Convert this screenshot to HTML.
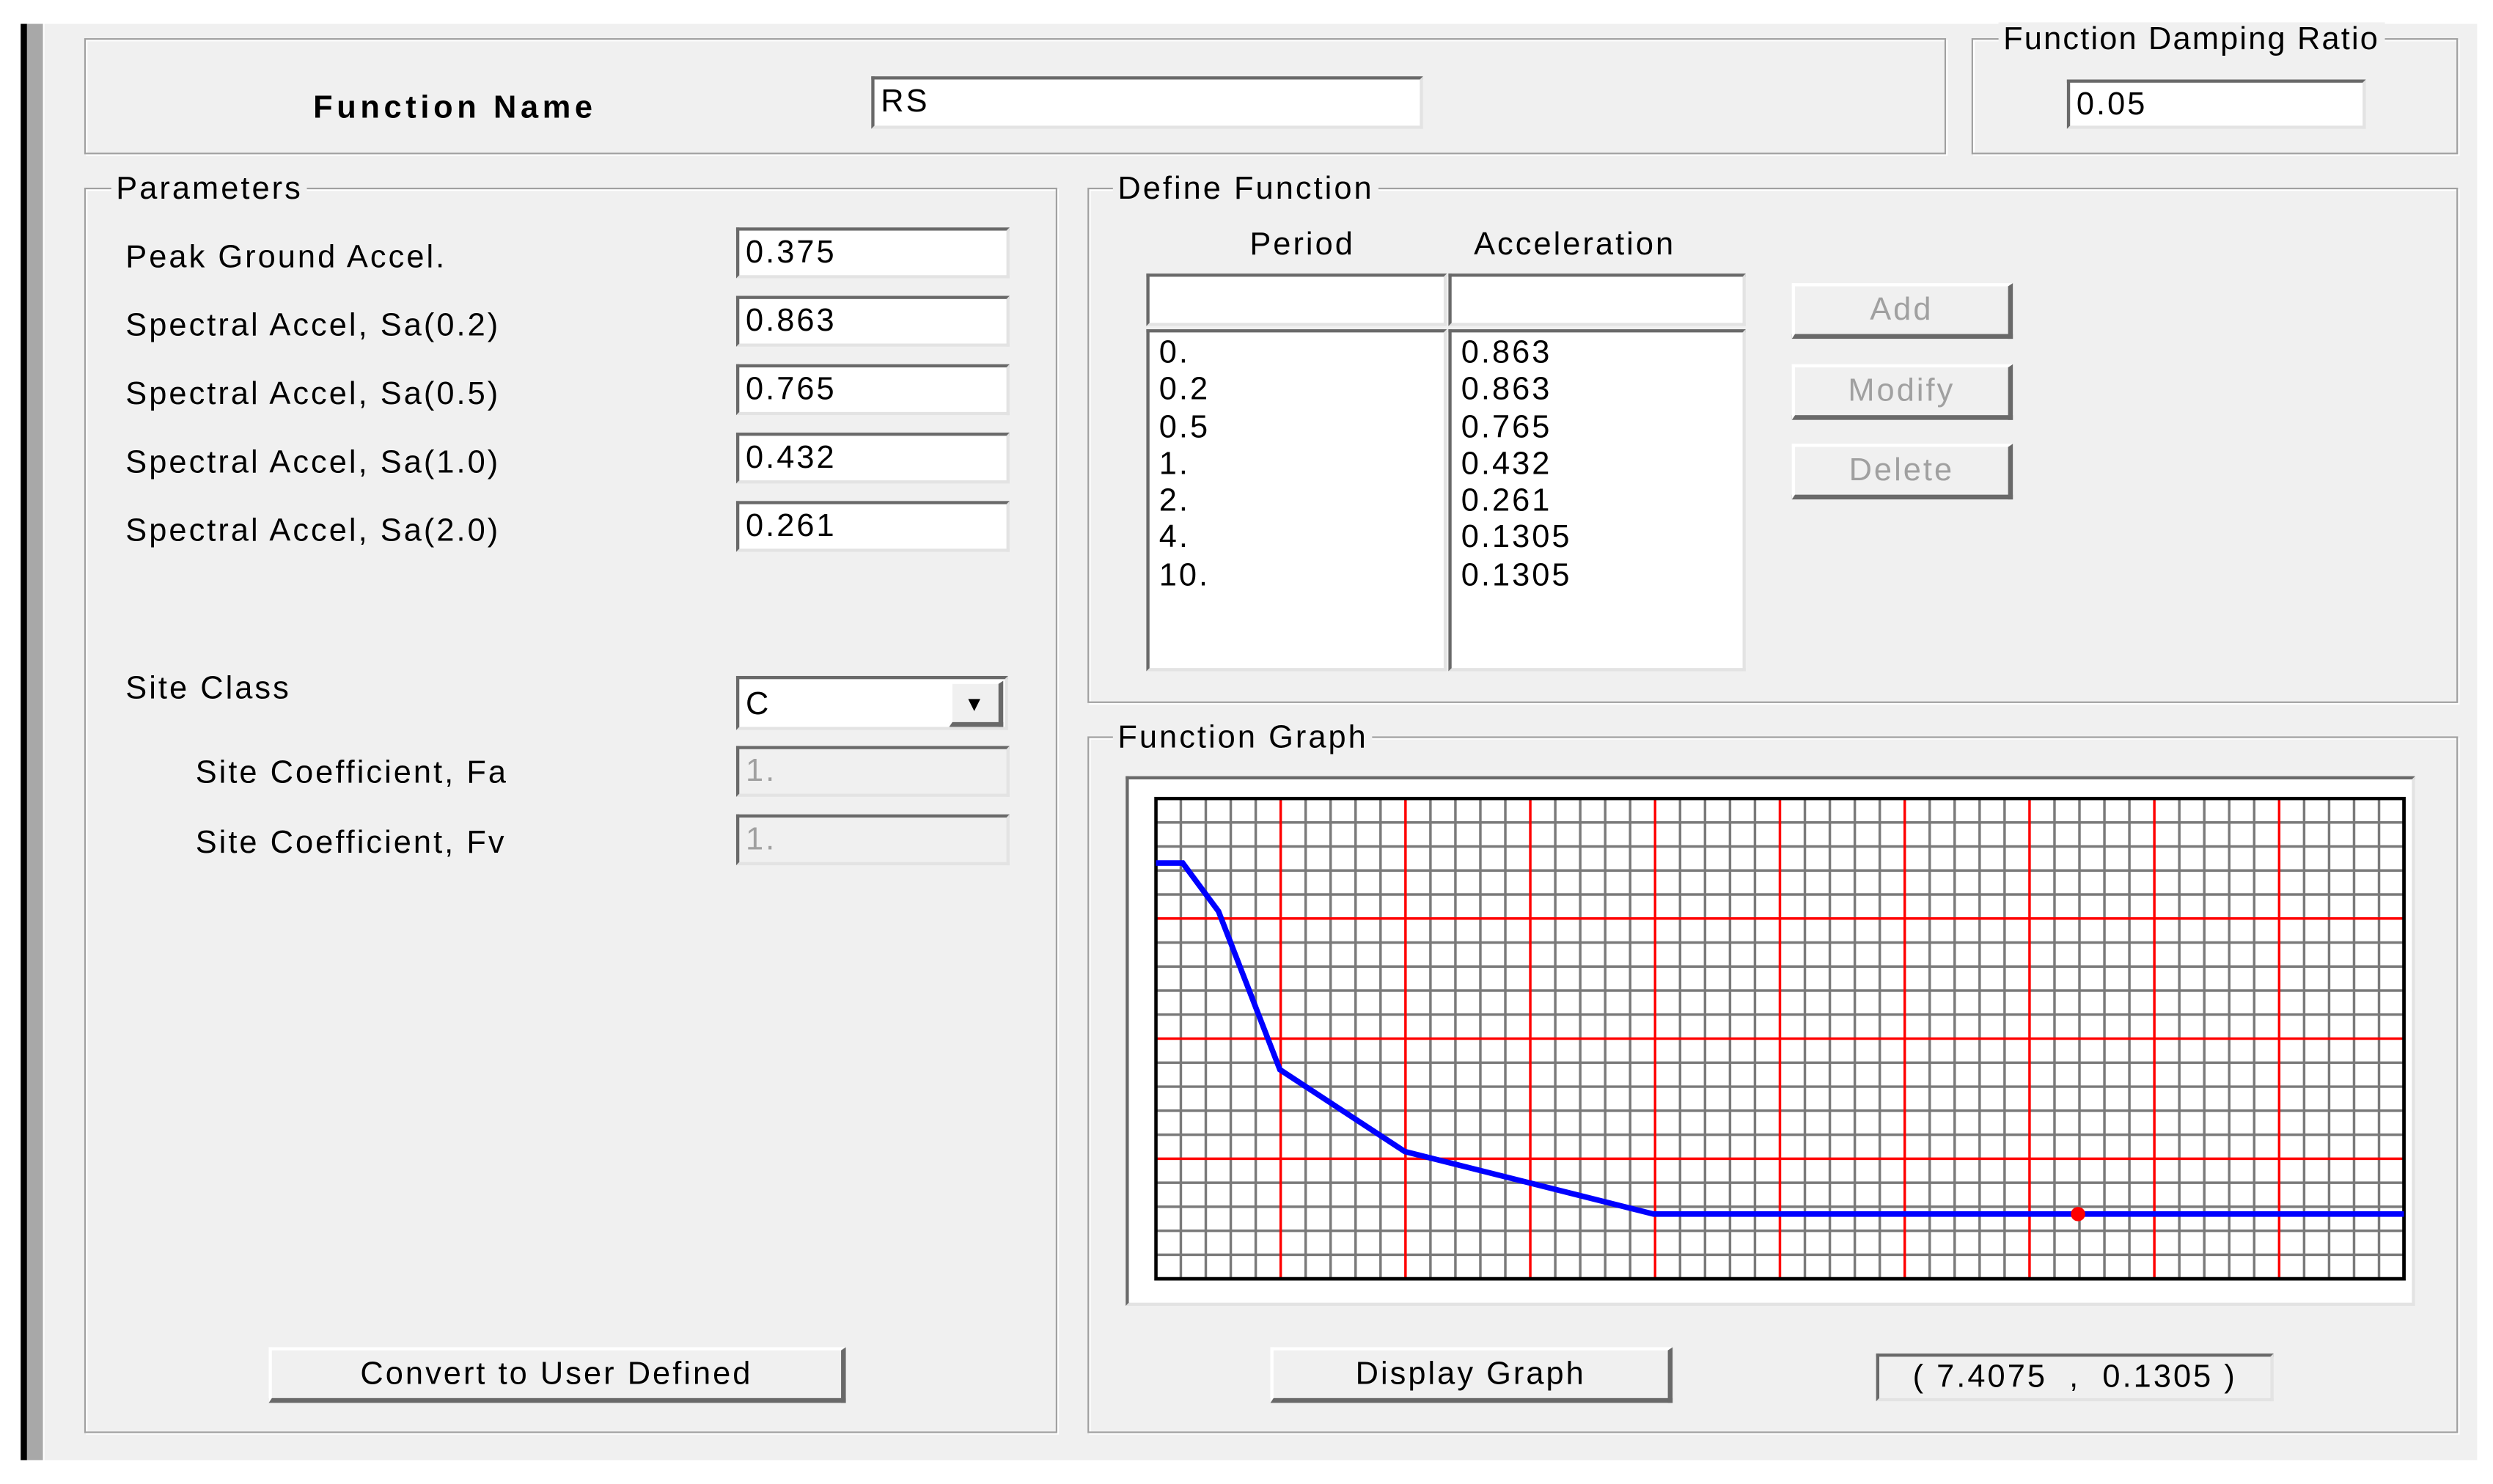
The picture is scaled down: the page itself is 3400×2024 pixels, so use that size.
<!DOCTYPE html>
<html><head><meta charset="utf-8"><style>
html,body{margin:0;padding:0;background:#fff;width:3400px;height:2024px;overflow:hidden}
#s{position:absolute;left:0;top:0;width:1568px;height:933px;transform:scale(2.16837,2.16931);transform-origin:0 0;font-family:"Liberation Sans",sans-serif;font-size:20px;color:#000;letter-spacing:1.4px}
.a{position:absolute}
.g{position:absolute;border:1px solid #a0a0a0;box-shadow:inset 1px 1px 0 #fff,1px 1px 0 #fff}
.lg{position:absolute;background:#f0f0f0;padding:0 3px;line-height:22px}
.tb{position:absolute;background:#fff;border-top:2px solid #696969;border-left:2px solid #696969;border-bottom:2px solid #e3e3e3;border-right:2px solid #e3e3e3;box-sizing:border-box;padding-left:4px;line-height:28px;white-space:nowrap}
.dis{background:#f0f0f0;color:#a0a0a0}
.bt{position:absolute;background:#f0f0f0;border-top:2px solid #fff;border-left:2px solid #fff;border-bottom:3px solid #696969;border-right:3px solid #696969;box-sizing:border-box;text-align:center;line-height:31px}
.lb{position:absolute;white-space:nowrap;line-height:22px}
</style></head><body>
<div id="s">
<div class="a" style="left:28px;top:15px;width:1530px;height:903px;background:#f0f0f0"></div>
<div class="a" style="left:13px;top:15px;width:4px;height:903px;background:#000"></div>
<div class="a" style="left:17px;top:15px;width:10px;height:903px;background:#a8a8a8"></div>

<div class="g" style="left:53px;top:24px;width:1169px;height:71px"></div>
<div class="lb" style="left:197px;top:57px;font-weight:bold;font-size:20px;letter-spacing:2.6px">Function Name</div>
<div class="tb" style="left:548px;top:48px;width:347px;height:33px">RS</div>

<div class="g" style="left:1240px;top:24px;width:304px;height:71px"></div>
<div class="lg" style="left:1257px;top:14px;letter-spacing:1px">Function Damping Ratio</div>
<div class="tb" style="left:1300px;top:50px;width:188px;height:31px">0.05</div>

<div class="g" style="left:53px;top:118px;width:610px;height:781px"></div>
<div class="lg" style="left:70px;top:108px">Parameters</div>
<div class="lb" style="left:79px;top:151px">Peak Ground Accel.</div>
<div class="lb" style="left:79px;top:194px">Spectral Accel, Sa(0.2)</div>
<div class="lb" style="left:79px;top:237px">Spectral Accel, Sa(0.5)</div>
<div class="lb" style="left:79px;top:280px">Spectral Accel, Sa(1.0)</div>
<div class="lb" style="left:79px;top:323px">Spectral Accel, Sa(2.0)</div>
<div class="tb" style="left:463px;top:143px;width:172px;height:32px">0.375</div>
<div class="tb" style="left:463px;top:186px;width:172px;height:32px">0.863</div>
<div class="tb" style="left:463px;top:229px;width:172px;height:32px">0.765</div>
<div class="tb" style="left:463px;top:272px;width:172px;height:32px">0.432</div>
<div class="tb" style="left:463px;top:315px;width:172px;height:32px">0.261</div>
<div class="lb" style="left:79px;top:422px">Site Class</div>
<div class="tb" style="left:463px;top:425px;width:171px;height:34px;line-height:32px">C</div>
<div class="bt" style="left:597px;top:428px;width:34px;height:29px;line-height:26px;font-size:13px">▼</div>
<div class="lb" style="left:123px;top:475px">Site Coefficient, Fa</div>
<div class="lb" style="left:123px;top:519px">Site Coefficient, Fv</div>
<div class="tb dis" style="left:463px;top:469px;width:172px;height:32px">1.</div>
<div class="tb dis" style="left:463px;top:512px;width:172px;height:32px">1.</div>
<div class="bt" style="left:169px;top:847px;width:363px;height:35px">Convert to User Defined</div>

<div class="g" style="left:684px;top:118px;width:860px;height:322px"></div>
<div class="lg" style="left:700px;top:108px">Define Function</div>
<div class="lb" style="left:786px;top:143px">Period</div>
<div class="lb" style="left:927px;top:143px">Acceleration</div>
<div class="tb" style="left:721px;top:172px;width:189px;height:33px"></div>
<div class="tb" style="left:911px;top:172px;width:187px;height:33px"></div>
<div class="tb" style="left:721px;top:207px;width:189px;height:215px;line-height:23.3px;padding-top:2px;padding-left:6px;white-space:pre">0.
0.2
0.5
1.
2.
4.
10.</div>
<div class="tb" style="left:911px;top:207px;width:187px;height:215px;line-height:23.3px;padding-top:2px;padding-left:6px;white-space:pre">0.863
0.863
0.765
0.432
0.261
0.1305
0.1305</div>
<div class="bt" style="left:1127px;top:178px;width:139px;height:35px;color:#a0a0a0">Add</div>
<div class="bt" style="left:1127px;top:229px;width:139px;height:35px;color:#a0a0a0">Modify</div>
<div class="bt" style="left:1127px;top:279px;width:139px;height:35px;color:#a0a0a0">Delete</div>

<div class="g" style="left:684px;top:463px;width:860px;height:436px"></div>
<div class="lg" style="left:700px;top:453px">Function Graph</div>
<div class="tb" style="left:708px;top:488px;width:811px;height:333px"></div>
<svg class="a" style="left:726px;top:501px" width="788" height="305" viewBox="0 0 788 305">
<g stroke="#7a7a7a" stroke-width="1.6" id="gr"></g>
<g id="red" stroke="#ff0000" stroke-width="1.6"></g>
<rect x="1" y="1" width="785" height="302" fill="none" stroke="#000" stroke-width="2.2"/>
<polyline fill="none" stroke="#0000ff" stroke-width="3.5" points="1,41.6 17.9,41.6 40.4,72 79,171.5 157.6,223 314,262.3 786,262.3"/>
<circle cx="581" cy="262.3" r="4.5" fill="#ff0000"/>
</svg>
<div class="bt" style="left:799px;top:847px;width:253px;height:35px">Display Graph</div>
<div class="tb" style="left:1180px;top:851px;width:250px;height:30px;background:#f0f0f0;text-align:center;line-height:27px;padding:0">( 7.4075 &nbsp;, &nbsp;0.1305 )</div>
</div>
<script>
var g=document.getElementById('gr'),r=document.getElementById('red'),ns='http://www.w3.org/2000/svg';
function L(p,x1,y1,x2,y2){var l=document.createElementNS(ns,'line');l.setAttribute('x1',x1);l.setAttribute('y1',y1);l.setAttribute('x2',x2);l.setAttribute('y2',y2);p.appendChild(l);}
for(var i=1;i<50;i++){var x=1+785*i/50;L(i%5?g:r,x,1,x,303);}
for(var j=1;j<20;j++){var y=1+302*j/20;L(j%5?g:r,1,y,786,y);}
</script>
</body></html>
